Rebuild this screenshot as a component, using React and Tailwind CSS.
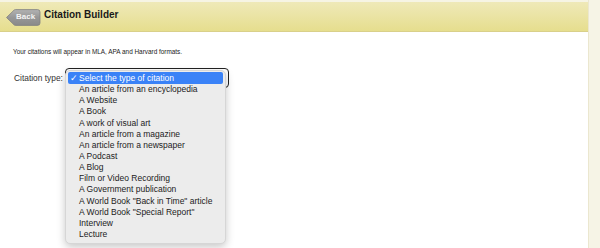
const options = [
  'An article from an encyclopedia',
  'A Website',
  'A Book',
  'A work of visual art',
  'An article from a magazine',
  'An article from a newspaper',
  'A Podcast',
  'A Blog',
  'Film or Video Recording',
  'A Government publication',
  'A World Book "Back in Time" article',
  'A World Book "Special Report"',
  'Interview',
  'Lecture',
];

const BackButton = () => (
  <div className="relative w-[36px] h-[17px] ml-[5px] mt-[1px]">
    <svg className="absolute inset-0" width="36" height="17" viewBox="0 0 36 17">
      <defs>
        <linearGradient id="bk" x1="0" y1="0" x2="0" y2="1">
          <stop offset="0" stopColor="#b3b3b3" />
          <stop offset="0.5" stopColor="#979797" />
          <stop offset="1" stopColor="#8a8a8a" />
        </linearGradient>
      </defs>
      <path
        d="M1.5 8.5 L9 1.2 Q9.6 0.6 10.5 0.6 L32.5 0.6 Q35 0.6 35 3 L35 14 Q35 16.4 32.5 16.4 L10.5 16.4 Q9.6 16.4 9 15.8 Z"
        fill="url(#bk)"
        stroke="#808080"
        strokeWidth="0.8"
      />
    </svg>
    <span className="absolute left-[11px] top-[3px] text-[8px] leading-[10px] font-bold text-[#f4f4f4]">
      Back
    </span>
  </div>
);

export default function App() {
  return (
    <div className="w-[600px] h-[248px] flex bg-white overflow-hidden font-['Liberation_Sans',Arial,sans-serif]">
      <div className="w-[588px] flex flex-col">
        <div className="h-[2px] bg-[#f6f4e4]" />
        <div className="h-[30px] flex items-center gap-[3px] bg-gradient-to-b from-[#efe9b8] to-[#e6de8e] border-b border-[#d9d08a]">
          <BackButton />
          <h1 className="text-[10px] font-bold text-[#1a1a1a] -mt-[4px]">Citation Builder</h1>
        </div>
        <div className="pl-[13px] pt-[16px]">
          <p className="text-[6.4px] leading-[8px] text-[#222]">
            Your citations will appear in MLA, APA and Harvard formats.
          </p>
          <div className="flex items-center mt-[12px] relative">
            <span className="w-[52px] text-[8.4px] text-[#333] pl-[1px] pt-[1px]">Citation type:</span>
            <div className="w-[164px] h-[20px] border-[1.5px] border-[#222] rounded-[4px]" />
            <div className="absolute left-[52px] top-[2px] w-[161px] bg-[#ececec] rounded-[5px] border border-[#d6d6d6] shadow-[0_3px_9px_rgba(0,0,0,0.22)] px-[2px] pt-[1px] pb-[3px] text-[8.5px] text-[#222]">
              <div className="h-[12px] flex items-center bg-[#3a82f7] text-white rounded-[2px] pl-[2px]">
                <span className="w-[9px]">✓</span>
                <span>Select the type of citation</span>
              </div>
              {options.map((o) => (
                <div key={o} className="h-[11.15px] flex items-center pl-[11px] whitespace-nowrap">
                  {o}
                </div>
              ))}
            </div>
          </div>
        </div>
      </div>
      <div className="flex-1 bg-[#f6f4e6] border-l border-[#ebe7cf]" />
    </div>
  );
}
